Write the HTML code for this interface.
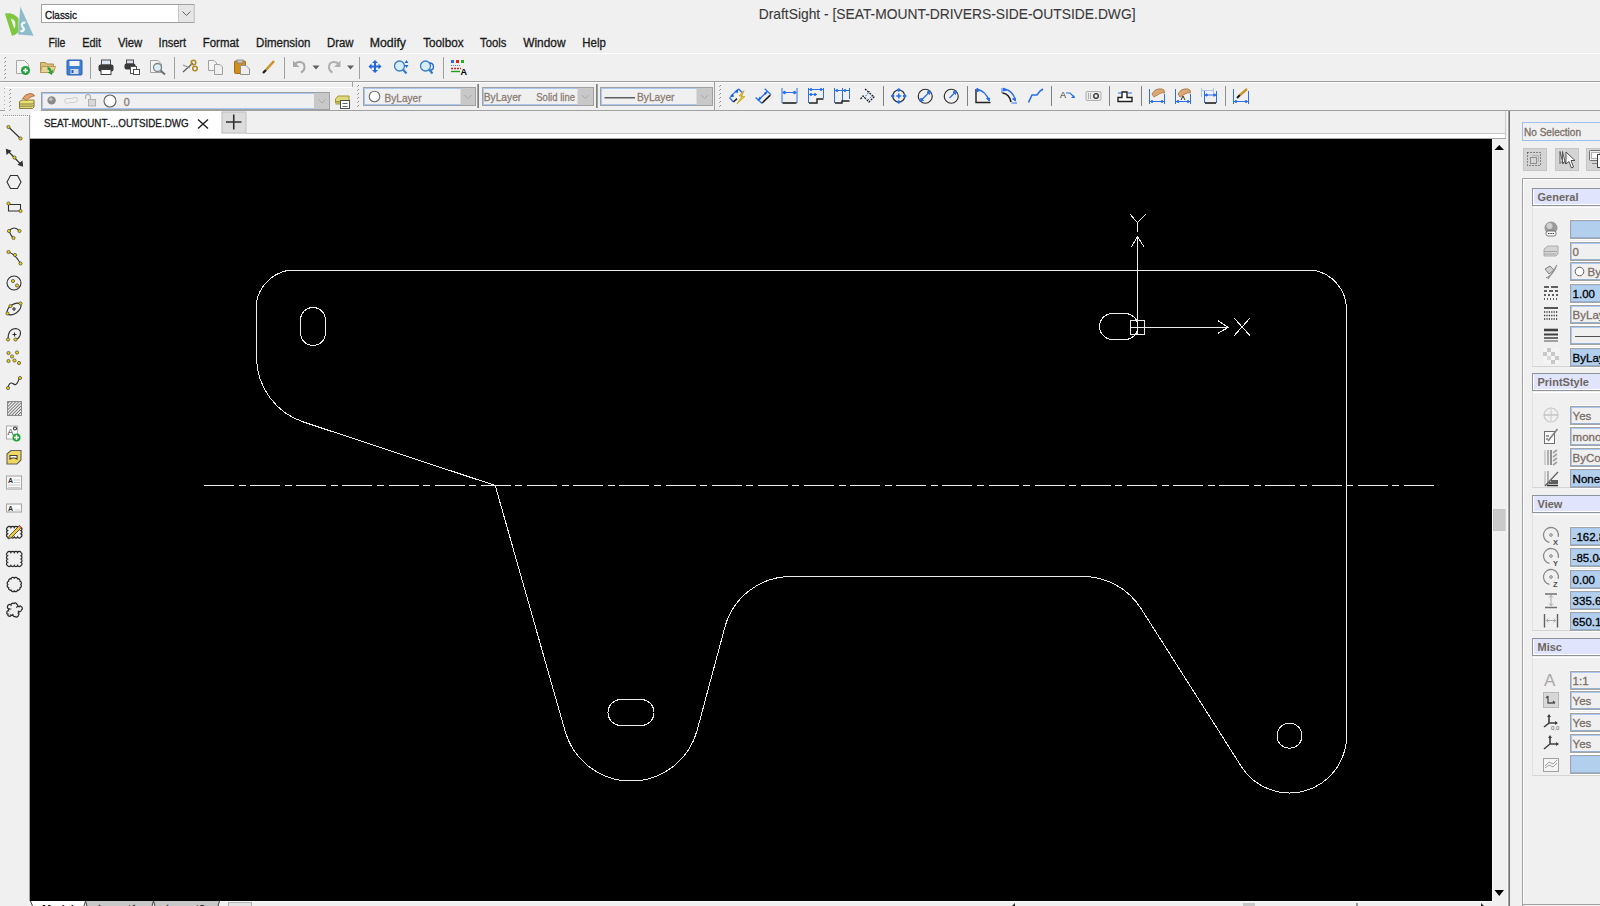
<!DOCTYPE html>
<html><head><meta charset="utf-8"><style>
html,body{margin:0;padding:0;background:#f0f0f0;overflow:hidden;width:1600px;height:906px}
svg{display:block;font-family:"Liberation Sans",sans-serif}
</style></head><body>
<svg width="1600" height="906" viewBox="0 0 1600 906" shape-rendering="auto">
<rect x="0" y="0" width="1600" height="906" fill="#f0f0f0"/>
<rect x="0" y="53" width="1600" height="1" fill="#ffffff"/>
<rect x="0" y="52" width="1600" height="1" fill="#ededed"/>
<text x="758.75" y="18.9" font-size="14.5" fill="#3a3a3a" stroke="#3a3a3a" stroke-width="0.1" textLength="376.75" lengthAdjust="spacingAndGlyphs">DraftSight - [SEAT-MOUNT-DRIVERS-SIDE-OUTSIDE.DWG]</text>
<text x="48.4" y="47" font-size="12" fill="#1a1a1a" stroke="#1a1a1a" stroke-width="0.3" textLength="16.90" lengthAdjust="spacingAndGlyphs">File</text>
<text x="82.2" y="47" font-size="12" fill="#1a1a1a" stroke="#1a1a1a" stroke-width="0.3" textLength="18.80" lengthAdjust="spacingAndGlyphs">Edit</text>
<text x="117.9" y="47" font-size="12" fill="#1a1a1a" stroke="#1a1a1a" stroke-width="0.3" textLength="24.30" lengthAdjust="spacingAndGlyphs">View</text>
<text x="158.6" y="47" font-size="12" fill="#1a1a1a" stroke="#1a1a1a" stroke-width="0.3" textLength="27.40" lengthAdjust="spacingAndGlyphs">Insert</text>
<text x="202.8" y="47" font-size="12" fill="#1a1a1a" stroke="#1a1a1a" stroke-width="0.3" textLength="36.10" lengthAdjust="spacingAndGlyphs">Format</text>
<text x="256.1" y="47" font-size="12" fill="#1a1a1a" stroke="#1a1a1a" stroke-width="0.3" textLength="54.40" lengthAdjust="spacingAndGlyphs">Dimension</text>
<text x="327" y="47" font-size="12" fill="#1a1a1a" stroke="#1a1a1a" stroke-width="0.3" textLength="26.50" lengthAdjust="spacingAndGlyphs">Draw</text>
<text x="369.8" y="47" font-size="12" fill="#1a1a1a" stroke="#1a1a1a" stroke-width="0.3" textLength="36.20" lengthAdjust="spacingAndGlyphs">Modify</text>
<text x="423.2" y="47" font-size="12" fill="#1a1a1a" stroke="#1a1a1a" stroke-width="0.3" textLength="40.40" lengthAdjust="spacingAndGlyphs">Toolbox</text>
<text x="480.1" y="47" font-size="12" fill="#1a1a1a" stroke="#1a1a1a" stroke-width="0.3" textLength="26.30" lengthAdjust="spacingAndGlyphs">Tools</text>
<text x="523.2" y="47" font-size="12" fill="#1a1a1a" stroke="#1a1a1a" stroke-width="0.3" textLength="42.30" lengthAdjust="spacingAndGlyphs">Window</text>
<text x="582.3" y="47" font-size="12" fill="#1a1a1a" stroke="#1a1a1a" stroke-width="0.3" textLength="23.50" lengthAdjust="spacingAndGlyphs">Help</text>
<rect x="41.5" y="4.5" width="152.5" height="18" fill="#ffffff" stroke="#a0a0a0" stroke-width="1"/>
<rect x="179" y="5" width="14.5" height="17" fill="#e6e6e6"/>
<rect x="178" y="5" width="1" height="17" fill="#c8c8c8"/>
<path d="M182.5 11.5 L186.5 15.5 L190.5 11.5" fill="none" stroke="#606060" stroke-width="1"/>
<text x="45" y="18.75" font-size="11.8" fill="#101010" stroke="#101010" stroke-width="0.3" textLength="32.00" lengthAdjust="spacingAndGlyphs">Classic</text>
<rect x="0" y="81" width="1600" height="1" fill="#a0a0a0"/>
<rect x="0" y="82" width="1600" height="1" fill="#fafafa"/>
<rect x="0" y="110" width="5" height="1" fill="#a0a0a0"/>
<rect x="41" y="110" width="1559" height="1" fill="#a0a0a0"/>
<rect x="31" y="111" width="190" height="28" fill="#ffffff"/>
<rect x="222" y="112" width="24" height="21" fill="#dcdcdc" stroke="#c0c0c0" stroke-width="1"/>
<text x="43.9" y="127" font-size="10.8" fill="#1a1a1a" stroke="#1a1a1a" stroke-width="0.3" textLength="144.70" lengthAdjust="spacingAndGlyphs">SEAT-MOUNT-...OUTSIDE.DWG</text>
<path d="M198 119.5 L208 128.5 M208 119.5 L198 128.5" stroke="#202020" stroke-width="1.4"/>
<path d="M226 122 H241.5 M233.75 114.5 V129.5" stroke="#303030" stroke-width="1.6"/>
<rect x="246" y="133" width="1260" height="1" fill="#c8c8c8"/>
<rect x="221" y="134" width="1284" height="5" fill="#ffffff"/>
<rect x="1505" y="111" width="1" height="28" fill="#c8c8c8"/>
<rect x="30" y="139" width="1462" height="762" fill="#000000"/>
<rect x="30" y="138" width="1476" height="1" fill="#a8a8a8"/>
<path d="M1494.5 150 L1499.25 145 L1504 150 Z" fill="#000"/>
<path d="M1494.5 890 L1499.25 896 L1504 890 Z" fill="#000"/>
<rect x="1492" y="139" width="1" height="762" fill="#fafafa"/>
<rect x="1493.5" y="509.5" width="11.5" height="21" fill="#cacaca" stroke="#c4c4c4"/>
<rect x="1507" y="111" width="1" height="795" fill="#f8f8f8"/>
<rect x="1508" y="111" width="1" height="795" fill="#a0a0a0"/>
<rect x="1509" y="111" width="1" height="795" fill="#707070"/>
<rect x="30" y="901" width="1462" height="1" fill="#ffffff"/>
<g fill="none" stroke="#ececec" stroke-width="1" shape-rendering="crispEdges">
<path d="M287.3 270.5 H1315 A40 40 0 0 1 1346.5 306.8 V736 A57 57 0 0 1 1241.39 766.57 L1140.82 608.27 A68.5 68.5 0 0 0 1083 576.5 H791 A68.5 68.5 0 0 0 724.85 627.22 L697.15 730.28 A68.5 68.5 0 0 1 565.11 731.24 L495.2 485.5 L303.47 422.03 A68.5 68.5 0 0 1 256.5 357 V301.6 A40 40 0 0 1 287.3 270.5 Z"/>
<path d="M300.5 320 V333 A12.5 12.5 0 0 0 325.5 333 V320 A12.5 12.5 0 0 0 300.5 320 Z"/>
<path d="M1112.5 313.5 H1125 A13 13 0 0 1 1125 339.5 H1112.5 A13 13 0 0 1 1112.5 313.5 Z"/>
<path d="M621 699.5 H641 A13 13 0 0 1 641 725.5 H621 A13 13 0 0 1 621 699.5 Z"/>
<circle cx="1289.5" cy="735.7" r="12.5"/>
<path d="M204 485.5 H1435" stroke-dasharray="30 4.575 7 4.575"/>
<path d="M1137.5 334.5 V236.7 M1131.3 247.2 L1137.5 236.7 L1144.3 247.2 M1130.2 214.4 L1137.5 222.6 L1145.4 214.4 M1137.5 222.6 V232 M1130.5 327.5 H1228.2 M1217.7 320.4 L1228.2 327.4 L1217.7 333.4 M1234.3 318.3 L1249.8 335.5 M1249.8 318.3 L1234.3 335.5"/>
<rect x="1130.5" y="320.5" width="14" height="14"/>
</g>
<rect x="1522.5" y="122.5" width="90" height="18" fill="#f0f0f0" stroke="#9cc0ea" stroke-width="1"/>
<text x="1524" y="135.5" font-size="10.5" fill="#7a6e66" stroke="#7a6e66" stroke-width="0.3" textLength="57.00" lengthAdjust="spacingAndGlyphs">No Selection</text>
<rect x="1523.5" y="148.5" width="23" height="22" fill="#d4d4d4" stroke="#c6c6c6"/>
<rect x="1555.5" y="148.5" width="23" height="22" fill="#d4d4d4" stroke="#c6c6c6"/>
<rect x="1586.5" y="148.5" width="23" height="22" fill="#d4d4d4" stroke="#c6c6c6"/>
<rect x="1527.5" y="152.5" width="13" height="13" fill="none" stroke="#303030" stroke-dasharray="1 2"/><rect x="1530.5" y="157.5" width="6" height="6" fill="none" stroke="#909090"/><path d="M1532.5 156.5 V155.5 H1538.5 V161.5 H1537.5" fill="none" stroke="#b0b0b0"/>
<path d="M1560 151.5 V163.5 L1562 161.5 L1563 163 L1563 164 Z" fill="#fff" stroke="#505050" stroke-width="0.9"/>
<path d="M1562.5 151.5 V163.5 L1564.5 161.5 L1565.5 163 L1565.5 164 Z" fill="#fff" stroke="#505050" stroke-width="0.9"/>
<path d="M1566 152 V164 L1569 161.5 L1571.5 168 L1573.5 167 L1571 160.5 L1575 160.5 Z" fill="#fff" stroke="#404040" stroke-width="0.9"/>
<rect x="1589.5" y="150.5" width="12" height="10" rx="1" fill="#f0f0f0" stroke="#707070"/><rect x="1591.5" y="152.5" width="8" height="6" fill="#fafafa" stroke="#b0b0b0"/><path d="M1592 163.5 H1598" stroke="#808080"/><rect x="1597.5" y="154.5" width="4" height="13" fill="#fff" stroke="#404040"/>
<path d="M1522.5 906 V178.5 H1600" fill="none" stroke="#a0a0a0"/>
<path d="M1523.5 903 V179.5 H1600" fill="none" stroke="#ffffff"/>
<rect x="1522" y="904" width="78" height="1" fill="#a0a0a0"/>
<rect x="1532" y="206" width="1" height="160" fill="#e2e2e2"/>
<rect x="1532" y="366" width="68" height="1" fill="#d4d4d4"/>
<rect x="1533" y="207" width="67" height="1" fill="#ffffff"/>
<rect x="1532.5" y="188.5" width="80" height="17" fill="#e0e4fc" stroke="#8e949c" stroke-width="1"/>
<path d="M1533.5 205 V189.5 M1533 204.5 H1600" stroke="#ffffff" fill="none"/>
<text x="1537.5" y="201.1" font-size="11" fill="#6e665e" font-weight="bold">General</text>
<rect x="1570" y="219" width="30" height="1" fill="#ffffff"/>
<rect x="1570" y="220" width="30" height="19" fill="#a4a4a4"/>
<rect x="1571" y="221" width="29" height="17" fill="#a9c9f2"/>
<rect x="1572" y="222" width="28" height="15" fill="#b2cfee"/>
<rect x="1571" y="237" width="29" height="1" fill="#98b0d0"/>
<rect x="1570" y="239" width="30" height="1" fill="#ffffff"/>
<rect x="1570" y="241" width="30" height="1" fill="#ffffff"/>
<rect x="1570" y="242" width="30" height="19" fill="#a4a4a4"/>
<rect x="1571" y="243" width="29" height="17" fill="#a9c9f2"/>
<rect x="1572" y="244" width="28" height="15" fill="#f0f0f0"/>
<rect x="1571" y="259" width="29" height="1" fill="#98b0d0"/>
<rect x="1570" y="261" width="30" height="1" fill="#ffffff"/>
<text x="1572.6" y="256" font-size="11.5" fill="#7a6e66" stroke="#7a6e66" stroke-width="0.3">0</text>
<rect x="1570" y="261" width="30" height="1" fill="#ffffff"/>
<rect x="1570" y="262" width="30" height="19" fill="#a4a4a4"/>
<rect x="1571" y="263" width="29" height="17" fill="#a9c9f2"/>
<rect x="1572" y="264" width="28" height="15" fill="#f0f0f0"/>
<rect x="1571" y="279" width="29" height="1" fill="#98b0d0"/>
<rect x="1570" y="281" width="30" height="1" fill="#ffffff"/>
<circle cx="1579.5" cy="271.5" r="4.3" fill="#fff" stroke="#606060"/>
<text x="1587.5" y="276" font-size="11.5" fill="#7a6e66" stroke="#7a6e66" stroke-width="0.3">ByLayer</text>
<rect x="1570" y="283" width="30" height="1" fill="#ffffff"/>
<rect x="1570" y="284" width="30" height="19" fill="#a4a4a4"/>
<rect x="1571" y="285" width="29" height="17" fill="#a9c9f2"/>
<rect x="1572" y="286" width="28" height="15" fill="#b2cfee"/>
<rect x="1571" y="301" width="29" height="1" fill="#98b0d0"/>
<rect x="1570" y="303" width="30" height="1" fill="#ffffff"/>
<text x="1572.6" y="298" font-size="11.5" fill="#000" stroke="#000" stroke-width="0.3">1.00</text>
<rect x="1570" y="304" width="30" height="1" fill="#ffffff"/>
<rect x="1570" y="305" width="30" height="19" fill="#a4a4a4"/>
<rect x="1571" y="306" width="29" height="17" fill="#a9c9f2"/>
<rect x="1572" y="307" width="28" height="15" fill="#f0f0f0"/>
<rect x="1571" y="322" width="29" height="1" fill="#98b0d0"/>
<rect x="1570" y="324" width="30" height="1" fill="#ffffff"/>
<text x="1572.6" y="319" font-size="11.5" fill="#7a6e66" stroke="#7a6e66" stroke-width="0.3">ByLayer</text>
<rect x="1570" y="325" width="30" height="1" fill="#ffffff"/>
<rect x="1570" y="326" width="30" height="19" fill="#a4a4a4"/>
<rect x="1571" y="327" width="29" height="17" fill="#a9c9f2"/>
<rect x="1572" y="328" width="28" height="15" fill="#f0f0f0"/>
<rect x="1571" y="343" width="29" height="1" fill="#98b0d0"/>
<rect x="1570" y="345" width="30" height="1" fill="#ffffff"/>
<rect x="1575" y="336" width="25" height="1" fill="#505050"/>
<rect x="1570" y="347" width="30" height="1" fill="#ffffff"/>
<rect x="1570" y="348" width="30" height="19" fill="#a4a4a4"/>
<rect x="1571" y="349" width="29" height="17" fill="#a9c9f2"/>
<rect x="1572" y="350" width="28" height="15" fill="#b2cfee"/>
<rect x="1571" y="365" width="29" height="1" fill="#98b0d0"/>
<rect x="1570" y="367" width="30" height="1" fill="#ffffff"/>
<text x="1572.6" y="362" font-size="11.5" fill="#000" stroke="#000" stroke-width="0.3">ByLayer</text>
<rect x="1532" y="391" width="1" height="96" fill="#e2e2e2"/>
<rect x="1532" y="487" width="68" height="1" fill="#d4d4d4"/>
<rect x="1533" y="392" width="67" height="1" fill="#ffffff"/>
<rect x="1532.5" y="373.5" width="80" height="17" fill="#e0e4fc" stroke="#8e949c" stroke-width="1"/>
<path d="M1533.5 390 V374.5 M1533 389.5 H1600" stroke="#ffffff" fill="none"/>
<text x="1537.5" y="386.1" font-size="11" fill="#6e665e" font-weight="bold">PrintStyle</text>
<rect x="1570" y="405" width="30" height="1" fill="#ffffff"/>
<rect x="1570" y="406" width="30" height="19" fill="#a4a4a4"/>
<rect x="1571" y="407" width="29" height="17" fill="#a9c9f2"/>
<rect x="1572" y="408" width="28" height="15" fill="#f0f0f0"/>
<rect x="1571" y="423" width="29" height="1" fill="#98b0d0"/>
<rect x="1570" y="425" width="30" height="1" fill="#ffffff"/>
<text x="1572.6" y="420" font-size="11.5" fill="#7a6e66" stroke="#7a6e66" stroke-width="0.3">Yes</text>
<rect x="1570" y="426" width="30" height="1" fill="#ffffff"/>
<rect x="1570" y="427" width="30" height="19" fill="#a4a4a4"/>
<rect x="1571" y="428" width="29" height="17" fill="#a9c9f2"/>
<rect x="1572" y="429" width="28" height="15" fill="#f0f0f0"/>
<rect x="1571" y="444" width="29" height="1" fill="#98b0d0"/>
<rect x="1570" y="446" width="30" height="1" fill="#ffffff"/>
<text x="1572.6" y="441" font-size="11.5" fill="#7a6e66" stroke="#7a6e66" stroke-width="0.3">monochrome</text>
<rect x="1570" y="447" width="30" height="1" fill="#ffffff"/>
<rect x="1570" y="448" width="30" height="19" fill="#a4a4a4"/>
<rect x="1571" y="449" width="29" height="17" fill="#a9c9f2"/>
<rect x="1572" y="450" width="28" height="15" fill="#f0f0f0"/>
<rect x="1571" y="465" width="29" height="1" fill="#98b0d0"/>
<rect x="1570" y="467" width="30" height="1" fill="#ffffff"/>
<text x="1572.6" y="462" font-size="11.5" fill="#7a6e66" stroke="#7a6e66" stroke-width="0.3">ByColor</text>
<rect x="1570" y="468" width="30" height="1" fill="#ffffff"/>
<rect x="1570" y="469" width="30" height="19" fill="#a4a4a4"/>
<rect x="1571" y="470" width="29" height="17" fill="#a9c9f2"/>
<rect x="1572" y="471" width="28" height="15" fill="#b2cfee"/>
<rect x="1571" y="486" width="29" height="1" fill="#98b0d0"/>
<rect x="1570" y="488" width="30" height="1" fill="#ffffff"/>
<text x="1572.6" y="483" font-size="11.5" fill="#000" stroke="#000" stroke-width="0.3">None</text>
<rect x="1532" y="513" width="1" height="117" fill="#e2e2e2"/>
<rect x="1532" y="630" width="68" height="1" fill="#d4d4d4"/>
<rect x="1533" y="514" width="67" height="1" fill="#ffffff"/>
<rect x="1532.5" y="495.5" width="80" height="17" fill="#e0e4fc" stroke="#8e949c" stroke-width="1"/>
<path d="M1533.5 512 V496.5 M1533 511.5 H1600" stroke="#ffffff" fill="none"/>
<text x="1537.5" y="508.1" font-size="11" fill="#6e665e" font-weight="bold">View</text>
<rect x="1570" y="526" width="30" height="1" fill="#ffffff"/>
<rect x="1570" y="527" width="30" height="19" fill="#a4a4a4"/>
<rect x="1571" y="528" width="29" height="17" fill="#a9c9f2"/>
<rect x="1572" y="529" width="28" height="15" fill="#b2cfee"/>
<rect x="1571" y="544" width="29" height="1" fill="#98b0d0"/>
<rect x="1570" y="546" width="30" height="1" fill="#ffffff"/>
<text x="1572.6" y="541" font-size="11.5" fill="#000" stroke="#000" stroke-width="0.3">-162.8</text>
<rect x="1570" y="547" width="30" height="1" fill="#ffffff"/>
<rect x="1570" y="548" width="30" height="19" fill="#a4a4a4"/>
<rect x="1571" y="549" width="29" height="17" fill="#a9c9f2"/>
<rect x="1572" y="550" width="28" height="15" fill="#b2cfee"/>
<rect x="1571" y="565" width="29" height="1" fill="#98b0d0"/>
<rect x="1570" y="567" width="30" height="1" fill="#ffffff"/>
<text x="1572.6" y="562" font-size="11.5" fill="#000" stroke="#000" stroke-width="0.3">-85.04</text>
<rect x="1570" y="569" width="30" height="1" fill="#ffffff"/>
<rect x="1570" y="570" width="30" height="19" fill="#a4a4a4"/>
<rect x="1571" y="571" width="29" height="17" fill="#a9c9f2"/>
<rect x="1572" y="572" width="28" height="15" fill="#b2cfee"/>
<rect x="1571" y="587" width="29" height="1" fill="#98b0d0"/>
<rect x="1570" y="589" width="30" height="1" fill="#ffffff"/>
<text x="1572.6" y="584" font-size="11.5" fill="#000" stroke="#000" stroke-width="0.3">0.00</text>
<rect x="1570" y="590" width="30" height="1" fill="#ffffff"/>
<rect x="1570" y="591" width="30" height="19" fill="#a4a4a4"/>
<rect x="1571" y="592" width="29" height="17" fill="#a9c9f2"/>
<rect x="1572" y="593" width="28" height="15" fill="#b2cfee"/>
<rect x="1571" y="608" width="29" height="1" fill="#98b0d0"/>
<rect x="1570" y="610" width="30" height="1" fill="#ffffff"/>
<text x="1572.6" y="605" font-size="11.5" fill="#000" stroke="#000" stroke-width="0.3">335.6</text>
<rect x="1570" y="611" width="30" height="1" fill="#ffffff"/>
<rect x="1570" y="612" width="30" height="19" fill="#a4a4a4"/>
<rect x="1571" y="613" width="29" height="17" fill="#a9c9f2"/>
<rect x="1572" y="614" width="28" height="15" fill="#b2cfee"/>
<rect x="1571" y="629" width="29" height="1" fill="#98b0d0"/>
<rect x="1570" y="631" width="30" height="1" fill="#ffffff"/>
<text x="1572.6" y="626" font-size="11.5" fill="#000" stroke="#000" stroke-width="0.3">650.1</text>
<rect x="1532" y="656" width="1" height="119" fill="#e2e2e2"/>
<rect x="1532" y="775" width="68" height="1" fill="#d4d4d4"/>
<rect x="1533" y="657" width="67" height="1" fill="#ffffff"/>
<rect x="1532.5" y="638.5" width="80" height="17" fill="#e0e4fc" stroke="#8e949c" stroke-width="1"/>
<path d="M1533.5 655 V639.5 M1533 654.5 H1600" stroke="#ffffff" fill="none"/>
<text x="1537.5" y="651.1" font-size="11" fill="#6e665e" font-weight="bold">Misc</text>
<rect x="1570" y="670" width="30" height="1" fill="#ffffff"/>
<rect x="1570" y="671" width="30" height="19" fill="#a4a4a4"/>
<rect x="1571" y="672" width="29" height="17" fill="#a9c9f2"/>
<rect x="1572" y="673" width="28" height="15" fill="#f0f0f0"/>
<rect x="1571" y="688" width="29" height="1" fill="#98b0d0"/>
<rect x="1570" y="690" width="30" height="1" fill="#ffffff"/>
<text x="1572.6" y="685" font-size="11.5" fill="#7a6e66" stroke="#7a6e66" stroke-width="0.3">1:1</text>
<rect x="1570" y="690" width="30" height="1" fill="#ffffff"/>
<rect x="1570" y="691" width="30" height="19" fill="#a4a4a4"/>
<rect x="1571" y="692" width="29" height="17" fill="#a9c9f2"/>
<rect x="1572" y="693" width="28" height="15" fill="#f0f0f0"/>
<rect x="1571" y="708" width="29" height="1" fill="#98b0d0"/>
<rect x="1570" y="710" width="30" height="1" fill="#ffffff"/>
<text x="1572.6" y="705" font-size="11.5" fill="#7a6e66" stroke="#7a6e66" stroke-width="0.3">Yes</text>
<rect x="1570" y="712" width="30" height="1" fill="#ffffff"/>
<rect x="1570" y="713" width="30" height="19" fill="#a4a4a4"/>
<rect x="1571" y="714" width="29" height="17" fill="#a9c9f2"/>
<rect x="1572" y="715" width="28" height="15" fill="#f0f0f0"/>
<rect x="1571" y="730" width="29" height="1" fill="#98b0d0"/>
<rect x="1570" y="732" width="30" height="1" fill="#ffffff"/>
<text x="1572.6" y="727" font-size="11.5" fill="#7a6e66" stroke="#7a6e66" stroke-width="0.3">Yes</text>
<rect x="1570" y="733" width="30" height="1" fill="#ffffff"/>
<rect x="1570" y="734" width="30" height="19" fill="#a4a4a4"/>
<rect x="1571" y="735" width="29" height="17" fill="#a9c9f2"/>
<rect x="1572" y="736" width="28" height="15" fill="#f0f0f0"/>
<rect x="1571" y="751" width="29" height="1" fill="#98b0d0"/>
<rect x="1570" y="753" width="30" height="1" fill="#ffffff"/>
<text x="1572.6" y="748" font-size="11.5" fill="#7a6e66" stroke="#7a6e66" stroke-width="0.3">Yes</text>
<rect x="1570" y="754" width="30" height="1" fill="#ffffff"/>
<rect x="1570" y="755" width="30" height="19" fill="#a4a4a4"/>
<rect x="1571" y="756" width="29" height="17" fill="#a9c9f2"/>
<rect x="1572" y="757" width="28" height="15" fill="#b2cfee"/>
<rect x="1571" y="772" width="29" height="1" fill="#98b0d0"/>
<rect x="1570" y="774" width="30" height="1" fill="#ffffff"/>
<g transform="translate(1543 221)"><circle cx="8" cy="7" r="6.5" fill="#9a9a9a"/><circle cx="6.5" cy="5" r="3" fill="#d0d0d0"/><rect x="3" y="10" width="10" height="5" rx="2" fill="#f8f8f8" stroke="#606060" stroke-width="0.8"/><path d="M5 12.5 H11" stroke="#404040" stroke-dasharray="1.5 0.8"/></g>
<g transform="translate(1543 243)"><path d="M1 6 L5 3 H15 V11 L13 13 H1 Z" fill="#d4d4d4" stroke="#a0a0a0" stroke-width="0.8"/><path d="M1 8.5 H14 M1 11 H13" stroke="#a8a8a8"/></g>
<g transform="translate(1543 264)"><path d="M2 5 L7 2 L11 6 L6 10 Z" fill="#d0d0d0" stroke="#808080"/><path d="M14 1 Q10 8 5 15 M13 3 Q9 12 3 14" fill="none" stroke="#909090" stroke-width="1.2"/></g>
<g transform="translate(1543 285)"><path d="M1 2 H6 M8 2 H15 M1 6 H4 M6 6 H10 M12 6 H15 M1 10 H3 M5 10 H7 M9 10 H11 M13 10 H15 M1 14 H2 M4 14 H5 M7 14 H8 M10 14 H11 M13 14 H14" stroke="#303030" stroke-width="1.3" stroke-dasharray="none"/></g>
<g transform="translate(1543 306)"><path d="M1 2 H15" stroke="#303030" stroke-width="1.6"/><path d="M1 6 H15 M1 9.5 H15 M1 13 H15" stroke="#303030" stroke-width="1.3" stroke-dasharray="1.2 1.2"/></g>
<g transform="translate(1543 327)"><path d="M1 3 H15" stroke="#404040" stroke-width="2.6"/><path d="M1 7.5 H15" stroke="#404040" stroke-width="2"/><path d="M1 11 H15" stroke="#404040" stroke-width="1.5"/><path d="M1 14 H15" stroke="#505050" stroke-width="1"/></g>
<g transform="translate(1543 348)"><rect x="0" y="0" width="16" height="16" fill="#f4f4f4"/><rect x="4" y="0" width="4" height="4" fill="#c8c8c8"/><rect x="0" y="4" width="4" height="4" fill="#c8c8c8"/><rect x="8" y="4" width="4" height="4" fill="#c8c8c8"/><rect x="4" y="8" width="4" height="4" fill="#d8d8d8"/><rect x="12" y="8" width="4" height="4" fill="#c8c8c8"/><rect x="8" y="12" width="4" height="4" fill="#c8c8c8"/></g>
<g transform="translate(1543 406)"><circle cx="8" cy="9" r="7" fill="none" stroke="#c8c8c8" stroke-width="1.2"/><path d="M1 9 H15" stroke="#c0c0c0" stroke-width="1.4"/><path d="M8 3 V15" stroke="#c8c8c8"/></g>
<g transform="translate(1543 428)"><rect x="1.5" y="3.5" width="10" height="12" fill="#fafafa" stroke="#707070"/><path d="M3 8 H6 M3 11 H5" stroke="#404040"/><path d="M14.5 1 L5 13" stroke="#808080" stroke-width="1.6"/></g>
<g transform="translate(1543 449)"><rect x="1" y="1" width="2" height="15" fill="#d0d0d0"/><rect x="4" y="1" width="2" height="15" fill="#b0b0b0"/><rect x="7" y="1" width="2" height="15" fill="#909090"/><path d="M10 4 L14 1 M10 8 L14 5 M10 12 L14 9 M10 16 L14 13" stroke="#a0a0a0" stroke-width="1.6"/></g>
<g transform="translate(1543 470)"><rect x="1" y="1" width="2" height="15" fill="#d0d0d0"/><rect x="4" y="1" width="2" height="15" fill="#b0b0b0"/><path d="M2 16 L15 2" stroke="#606060" stroke-width="1.2"/><path d="M8 11 H15 M6 13 H15 M4 15.5 H15" stroke="#303030" stroke-width="1.6"/></g>
<g transform="translate(1543 528)"><path d="M15.2 8.9 A7.5 7.5 0 1 0 6.5 14.4" fill="none" stroke="#8a8a8a" stroke-width="1.3"/><circle cx="8" cy="7" r="1.3" fill="none" stroke="#808080"/><text x="10" y="17" font-size="7.5" font-weight="bold" fill="#505050">X</text></g>
<g transform="translate(1543 549)"><path d="M15.2 8.9 A7.5 7.5 0 1 0 6.5 14.4" fill="none" stroke="#8a8a8a" stroke-width="1.3"/><circle cx="8" cy="7" r="1.3" fill="none" stroke="#808080"/><text x="10" y="17" font-size="7.5" font-weight="bold" fill="#505050">Y</text></g>
<g transform="translate(1543 570)"><path d="M15.2 8.9 A7.5 7.5 0 1 0 6.5 14.4" fill="none" stroke="#8a8a8a" stroke-width="1.3"/><circle cx="8" cy="7" r="1.3" fill="none" stroke="#808080"/><text x="10" y="17" font-size="7.5" font-weight="bold" fill="#505050">Z</text></g>
<g transform="translate(1543 592)"><path d="M2 2 H14 M2 15.5 H14" stroke="#707070" stroke-width="1.3"/><path d="M8 3 V14 M6 5.5 L8 3.5 L10 5.5 M6 11.5 L8 13.5 L10 11.5" fill="none" stroke="#a8a8a8"/></g>
<g transform="translate(1543 613)"><path d="M1.5 1 V14.5 M14.5 1 V14.5" stroke="#606060" stroke-width="1.4"/><path d="M3 7.5 H13 M5.5 5.5 L3.5 7.5 L5.5 9.5 M10.5 5.5 L12.5 7.5 L10.5 9.5" fill="none" stroke="#a8a8a8"/></g>
<g transform="translate(1543 670)"><text x="1" y="16" font-size="17" fill="#a8a8a8">A</text></g>
<g transform="translate(1543 692)"><rect x="0.5" y="0.5" width="15" height="15" fill="#d8d8d8" stroke="#b8b8b8"/><path d="M5 4 V11 H12 M5 4 L3 6 M12 11 L10 9" fill="none" stroke="#505050" stroke-width="1.3"/></g>
<g transform="translate(1543 713)"><path d="M6 3 V10 L1 14 M6 10 H14" fill="none" stroke="#404040" stroke-width="1.6"/><path d="M6 1 L4 4 H8 Z M15 10 L12 8 V12 Z" fill="#404040"/><text x="8" y="16.5" font-size="6" fill="#606060">0,0</text></g>
<g transform="translate(1543 734)"><path d="M7 3 V10 L1 15 M7 10 H15" fill="none" stroke="#404040" stroke-width="1.6"/><path d="M7 1 L5 4 H9 Z M16 10 L13 8 V12 Z" fill="#404040"/></g>
<g transform="translate(1543 756)"><rect x="0.5" y="2.5" width="15" height="13" fill="#f4f4f4" stroke="#a0a0a0"/><path d="M2 10 L6 6 L10 8 L14 4 M2 12 L6 9 L10 11 L14 7" fill="none" stroke="#a0a0a0"/></g>
<rect x="5" y="57" width="1" height="1" fill="#8a8a8a"/>
<rect x="4" y="58" width="1" height="1" fill="#a8a8a8"/>
<rect x="5" y="61" width="1" height="1" fill="#8a8a8a"/>
<rect x="4" y="62" width="1" height="1" fill="#a8a8a8"/>
<rect x="5" y="65" width="1" height="1" fill="#8a8a8a"/>
<rect x="4" y="66" width="1" height="1" fill="#a8a8a8"/>
<rect x="5" y="69" width="1" height="1" fill="#8a8a8a"/>
<rect x="4" y="70" width="1" height="1" fill="#a8a8a8"/>
<rect x="5" y="73" width="1" height="1" fill="#8a8a8a"/>
<rect x="4" y="74" width="1" height="1" fill="#a8a8a8"/>
<rect x="5" y="77" width="1" height="1" fill="#8a8a8a"/>
<rect x="4" y="78" width="1" height="1" fill="#a8a8a8"/>
<g transform="translate(16 59)"><path d="M0.5 1.5 H8.5 L12.5 5.5 V14.5 H0.5 Z" fill="#f4f4f4" stroke="#a8a8a8"/><circle cx="9.5" cy="11.5" r="4.5" fill="#1fa33a"/><path d="M9.5 9 V14 M7 11.5 H12" stroke="#fff" stroke-width="1.6"/></g>
<g transform="translate(40 59)"><path d="M0.5 3.5 H5.5 L7 5 H13.5 V13.5 H0.5 Z" fill="#d8bd78" stroke="#b09048"/><path d="M2 7.5 H15.5 L13.5 13.5 H0.5 Z" fill="#e9d59a" stroke="#b89a58"/><path d="M7.5 8 Q11 8 11.5 12 L13.5 10 L12 16 L7.5 13.5 L9.5 13 Q9.5 10.5 7.5 10.5Z" fill="#2aa040"/></g>
<g transform="translate(66.5 59)"><rect x="0.5" y="1" width="15" height="15" rx="1" fill="#3f7fd0" stroke="#2860b0"/><rect x="3" y="2" width="10" height="5" fill="#f4f4f4"/><rect x="4" y="10" width="8" height="5" fill="#d8dce8"/><rect x="5" y="11" width="2" height="3" fill="#2860b0"/></g>
<rect x="90" y="57" width="1" height="22" fill="#a0a0a0"/>
<g transform="translate(98 59)"><rect x="3.5" y="1" width="9" height="5" fill="#dde8f4" stroke="#505050"/><rect x="0.5" y="5.5" width="15" height="7" rx="2" fill="#3a3a3a"/><rect x="3" y="10.5" width="10" height="5" fill="#fff" stroke="#404040"/></g>
<g transform="translate(124 59)"><rect x="2.5" y="1" width="7" height="4" fill="#dde" stroke="#505050"/><rect x="0.5" y="4.5" width="11" height="6" rx="2" fill="#3a3a3a"/><rect x="6.5" y="7.5" width="6" height="7" fill="#fff" stroke="#505050"/><rect x="9.5" y="10.5" width="6" height="5" fill="#fff" stroke="#505050"/></g>
<g transform="translate(150 59)"><path d="M0.5 1.5 H8 L11.5 5 V13.5 H0.5 Z" fill="#f4f4f4" stroke="#a0a0a0"/><circle cx="7.5" cy="8.5" r="4" fill="#d8eef8" stroke="#808080" stroke-width="1.3"/><path d="M10.5 11.5 L15 15.5" stroke="#707070" stroke-width="2"/></g>
<rect x="174" y="57" width="1" height="22" fill="#a0a0a0"/>
<g transform="translate(182 59)"><path d="M1 13 L11 4" stroke="#606060" stroke-width="1.3"/><path d="M1 6 L8 9" stroke="#909090" stroke-width="1.3"/><circle cx="11.5" cy="3.5" r="2.3" fill="none" stroke="#b08a20" stroke-width="1.5"/><circle cx="13" cy="9.5" r="2.3" fill="none" stroke="#b08a20" stroke-width="1.5"/></g>
<g transform="translate(208 59)"><path d="M0.5 1.5 H6 L8.5 4 V11.5 H0.5 Z" fill="#f4f4f4" stroke="#a0a0a0"/><path d="M6.5 5.5 H12 L14.5 8 V15.5 H6.5 Z" fill="#f0f0f0" stroke="#a0a0a0"/></g>
<g transform="translate(234 59)"><rect x="0.5" y="2" width="11" height="12.5" rx="1" fill="#d08e1c" stroke="#a86c10"/><rect x="3" y="1" width="6" height="3" fill="#c8c8c8" stroke="#808080" stroke-width="0.8"/><path d="M6.5 6.5 H12 L15.5 10 V15.5 H6.5 Z" fill="#eeeeee" stroke="#909090"/></g>
<g transform="translate(261 59)"><path d="M13 2 L5 11" stroke="#c89428" stroke-width="2.6"/><path d="M5 11 L2 14" stroke="#222" stroke-width="2.4"/></g>
<rect x="284" y="57" width="1" height="22" fill="#a0a0a0"/>
<g transform="translate(292 59)"><path d="M3 5 Q5 2.5 8.5 3 Q13 4 12.5 9 Q12 12 9 13.5" fill="none" stroke="#a8a8a8" stroke-width="2"/><path d="M1 1.5 V8 H7.5 Z" fill="#a8a8a8"/></g>
<path d="M312.5 65.5 H319.5 L316 69.5 Z" fill="#606060"/>
<g transform="translate(326.5 59)"><path d="M12 5 Q10 2.5 6.5 3 Q2 4 2.5 9 Q3 12 6 13.5" fill="none" stroke="#b0b0b0" stroke-width="2"/><path d="M14 1.5 V8 H7.5 Z" fill="#b0b0b0"/></g>
<path d="M347 65.5 H354 L350.5 69.5 Z" fill="#606060"/>
<rect x="359" y="57" width="1" height="22" fill="#a0a0a0"/>
<g transform="translate(368 59.5)"><path d="M7 0.5 L10 3.5 H8 V6 H10.5 V4 L13.5 7 L10.5 10 V8 H8 V10.5 H10 L7 13.5 L4 10.5 H6 V8 H3.5 V10 L0.5 7 L3.5 4 V6 H6 V3.5 H4 Z" fill="#1f6ad8"/></g>
<g transform="translate(393.5 59)"><circle cx="6" cy="7" r="5" fill="#d6ecf8" stroke="#3a7cc8" stroke-width="1.3"/><path d="M9.5 10.5 L13 14.5" stroke="#3a7cc8" stroke-width="2.2"/><path d="M13 1 L15 4 H11 Z M13 9 L15 6 H11Z" fill="#1f6ad8"/></g>
<g transform="translate(419.5 59)"><circle cx="6" cy="7" r="5" fill="#d6ecf8" stroke="#3a7cc8" stroke-width="1.3"/><path d="M9.5 10.5 L13 14.5" stroke="#3a7cc8" stroke-width="2.2"/><path d="M10 4 Q14 4 14 8 Q14 11 11 11" fill="none" stroke="#1f6ad8" stroke-width="1.3"/></g>
<rect x="443" y="57" width="1" height="22" fill="#a0a0a0"/>
<g transform="translate(451 59)"><rect x="0" y="1" width="3" height="3" fill="#2a6ee8"/><rect x="5" y="1" width="3" height="3" fill="#e82020"/><rect x="10" y="1" width="3" height="3" fill="#20b020"/><path d="M0 6.5 H10" stroke="#5080e0" stroke-dasharray="1 1"/><path d="M0 9.5 H10" stroke="#e02020" stroke-width="1.4" stroke-dasharray="2 1"/><path d="M0 12.5 H9" stroke="#20a020" stroke-width="1.4"/><text x="9.5" y="15.5" font-size="9" font-weight="bold" fill="#000">A</text></g>
<rect x="5" y="87" width="347" height="1" fill="#ffffff"/>
<rect x="4" y="88" width="1" height="1" fill="#b0b0b0"/>
<rect x="10" y="89" width="1" height="1" fill="#8a8a8a"/>
<rect x="9" y="90" width="1" height="1" fill="#a8a8a8"/>
<rect x="4" y="92" width="1" height="1" fill="#b0b0b0"/>
<rect x="10" y="93" width="1" height="1" fill="#8a8a8a"/>
<rect x="9" y="94" width="1" height="1" fill="#a8a8a8"/>
<rect x="4" y="96" width="1" height="1" fill="#b0b0b0"/>
<rect x="10" y="97" width="1" height="1" fill="#8a8a8a"/>
<rect x="9" y="98" width="1" height="1" fill="#a8a8a8"/>
<rect x="4" y="100" width="1" height="1" fill="#b0b0b0"/>
<rect x="10" y="101" width="1" height="1" fill="#8a8a8a"/>
<rect x="9" y="102" width="1" height="1" fill="#a8a8a8"/>
<rect x="4" y="104" width="1" height="1" fill="#b0b0b0"/>
<rect x="10" y="105" width="1" height="1" fill="#8a8a8a"/>
<rect x="9" y="106" width="1" height="1" fill="#a8a8a8"/>
<rect x="4" y="108" width="1" height="1" fill="#b0b0b0"/>
<rect x="10" y="109" width="1" height="1" fill="#8a8a8a"/>
<rect x="9" y="110" width="1" height="1" fill="#a8a8a8"/>
<rect x="352" y="82" width="1" height="5" fill="#a0a0a0"/>
<rect x="358" y="85" width="1" height="1" fill="#8a8a8a"/>
<rect x="357" y="86" width="1" height="1" fill="#a8a8a8"/>
<rect x="358" y="89" width="1" height="1" fill="#8a8a8a"/>
<rect x="357" y="90" width="1" height="1" fill="#a8a8a8"/>
<rect x="358" y="93" width="1" height="1" fill="#8a8a8a"/>
<rect x="357" y="94" width="1" height="1" fill="#a8a8a8"/>
<rect x="358" y="97" width="1" height="1" fill="#8a8a8a"/>
<rect x="357" y="98" width="1" height="1" fill="#a8a8a8"/>
<rect x="358" y="101" width="1" height="1" fill="#8a8a8a"/>
<rect x="357" y="102" width="1" height="1" fill="#a8a8a8"/>
<rect x="358" y="105" width="1" height="1" fill="#8a8a8a"/>
<rect x="357" y="106" width="1" height="1" fill="#a8a8a8"/>
<g transform="translate(19 93)"><path d="M0.5 8.5 L3 7 H15 V14 L13.5 15.5 H0.5 Z" fill="#e8e070" stroke="#787040" stroke-width="0.9"/><path d="M0.5 11 H13.5 L15 9.5 M0.5 13.2 H13.5 L15 11.7" fill="none" stroke="#787040" stroke-width="0.9"/><path d="M3 7 Q8 5 11 7" fill="#fff8b0"/><path d="M3.5 5.5 Q6 1 11 0.5 Q15 0.5 15.5 3 Q13 3 11 4.5 L8 7.5 Q6 6 3.5 5.5 Z" fill="#e0a070" stroke="#a06030" stroke-width="0.8"/></g>
<rect x="41.5" y="92.5" width="288" height="17" fill="#f0f0f0" stroke="#a0a0a0"/>
<path d="M42.5 109 V93.5 H314" fill="none" stroke="#a8c8f0"/>
<rect x="42" y="108" width="272" height="1" fill="#a8c8f0"/>
<rect x="314" y="93" width="15" height="16" fill="#c8c8c8"/>
<path d="M318.5 99.5 L322 103 L325.5 99.5" fill="none" stroke="#a8a8a8"/>
<circle cx="51.6" cy="100.4" r="4.2" fill="#8a8a8a"/><circle cx="50.8" cy="99.3" r="1.8" fill="#c0c0c0"/>
<path d="M65 102 Q64 98 68 98.5 Q72 99 75 97.5 Q78 97 77.5 100 Q77 103 72 102.5 Q68 102 66.5 104 Z" fill="none" stroke="#c8c8c8" stroke-width="0.9"/>
<path d="M85.5 99 V97 Q85.5 94.5 88 94.5 Q90.5 94.5 90.5 97 V99" fill="none" stroke="#b0b0b0" stroke-width="1.2"/><rect x="88.5" y="99.5" width="7" height="6.5" fill="#d8d8d8" stroke="#b0b0b0"/>
<circle cx="110" cy="101" r="6" fill="#fff" stroke="#606060" stroke-width="1.1"/>
<text x="123.7" y="105.8" font-size="10.5" fill="#8a7a70" stroke="#8a7a70" stroke-width="0.3" textLength="6.00" lengthAdjust="spacingAndGlyphs">0</text>
<g transform="translate(335 94)"><path d="M0.5 5 L3 2 H14 V9 H0.5 Z" fill="#e0d880" stroke="#a09830"/><path d="M0.5 7.5 H10 M0.5 10 H8" stroke="#a09830"/><rect x="5.5" y="6.5" width="9" height="8" fill="#fff" stroke="#505050"/><path d="M7.5 9.5 H12.5 M7.5 12.5 H12.5" stroke="#606060"/></g>
<rect x="363.5" y="87.5" width="112" height="18" fill="#f0f0f0" stroke="#a0a0a0"/>
<path d="M364.5 105 V88.5 H461" fill="none" stroke="#a8c8f0"/>
<rect x="364" y="104" width="97" height="1" fill="#a8c8f0"/>
<rect x="460.5" y="88" width="14.5" height="17" fill="#c8c8c8"/>
<path d="M464.5 95.0 L468.0 98.5 L471.5 95.0" fill="none" stroke="#a8a8a8"/>
<circle cx="374.5" cy="96.5" r="5.3" fill="#fff" stroke="#707070" stroke-width="1.1"/>
<text x="384.5" y="101.6" font-size="11.8" fill="#8a7a70" stroke="#8a7a70" stroke-width="0.3" textLength="37.10" lengthAdjust="spacingAndGlyphs">ByLayer</text>
<rect x="477" y="84" width="1" height="24" fill="#a0a0a0"/>
<rect x="478" y="84" width="1" height="24" fill="#808080"/>
<rect x="482.5" y="87.5" width="111" height="18" fill="#f0f0f0" stroke="#a0a0a0"/>
<path d="M483.5 105 V88.5 H578" fill="none" stroke="#a8c8f0"/>
<rect x="483" y="104" width="95" height="1" fill="#a8c8f0"/>
<rect x="577.5" y="88" width="15.5" height="17" fill="#c8c8c8"/>
<path d="M582.0 95.0 L585.5 98.5 L589.0 95.0" fill="none" stroke="#a8a8a8"/>
<text x="483.75" y="101.25" font-size="11.8" fill="#8a7a70" stroke="#8a7a70" stroke-width="0.3" textLength="37.50" lengthAdjust="spacingAndGlyphs">ByLayer</text>
<text x="536.25" y="101.25" font-size="11.8" fill="#8a7a70" stroke="#8a7a70" stroke-width="0.3" textLength="38.75" lengthAdjust="spacingAndGlyphs">Solid line</text>
<rect x="596" y="84" width="1" height="24" fill="#808080"/>
<rect x="597" y="84" width="1" height="24" fill="#a0a0a0"/>
<rect x="600.5" y="87.5" width="112" height="18" fill="#f0f0f0" stroke="#a0a0a0"/>
<path d="M601.5 105 V88.5 H697" fill="none" stroke="#a8c8f0"/>
<rect x="601" y="104" width="96" height="1" fill="#a8c8f0"/>
<rect x="696.5" y="88" width="15.5" height="17" fill="#c8c8c8"/>
<path d="M701.0 95.0 L704.5 98.5 L708.0 95.0" fill="none" stroke="#a8a8a8"/>
<rect x="604.5" y="97" width="30.5" height="1.5" fill="#606060"/>
<text x="637" y="101.25" font-size="11.8" fill="#8a7a70" stroke="#8a7a70" stroke-width="0.3" textLength="37.50" lengthAdjust="spacingAndGlyphs">ByLayer</text>
<rect x="714" y="82" width="1" height="28" fill="#a0a0a0"/>
<rect x="720" y="85" width="1" height="1" fill="#8a8a8a"/>
<rect x="719" y="86" width="1" height="1" fill="#a8a8a8"/>
<rect x="720" y="89" width="1" height="1" fill="#8a8a8a"/>
<rect x="719" y="90" width="1" height="1" fill="#a8a8a8"/>
<rect x="720" y="93" width="1" height="1" fill="#8a8a8a"/>
<rect x="719" y="94" width="1" height="1" fill="#a8a8a8"/>
<rect x="720" y="97" width="1" height="1" fill="#8a8a8a"/>
<rect x="719" y="98" width="1" height="1" fill="#a8a8a8"/>
<rect x="720" y="101" width="1" height="1" fill="#8a8a8a"/>
<rect x="719" y="102" width="1" height="1" fill="#a8a8a8"/>
<rect x="720" y="105" width="1" height="1" fill="#8a8a8a"/>
<rect x="719" y="106" width="1" height="1" fill="#a8a8a8"/>
<g fill="none" stroke="#2a6ee8" stroke-width="1.3"><path d="M733.4 102 L729.5 97.5 M738.4 88.7 L742.5 92.8"/><path d="M730.6 96.4 L738 89.4"/></g>
<path d="M733.4 102 L737 98.6" stroke="#202020" stroke-width="1.5"/>
<path d="M729.8 97.6 L732.6 93.4 L734.2 96.6 Z M738.6 88.8 L734.4 91.6 L737.6 93.2Z" fill="#1f5ee0"/>
<path d="M744 90.5 L739 96 L742 96.3 L736.8 104 L745 96.5 L741.8 96.4 Z" fill="#e8c010" stroke="#b09000" stroke-width="0.5"/>
<g fill="none" stroke="#2a6ee8" stroke-width="1.3"><path d="M764.7 88.7 L770.9 94.6 M762.2 103.4 L755.6 97.4 M758 100.5 L767.5 91.2"/></g>
<path d="M770.3 95.2 L762.2 103" stroke="#202020" stroke-width="1.6"/>
<path d="M757.5 100.8 L759.5 96.8 L761.5 98.8 Z M767.8 91 L763.8 93 L765.8 95 Z" fill="#1f5ee0"/>
<g transform="translate(781.5 88)"><g fill="none" stroke="#2a6ee8" stroke-width="1"><path d="M0.5 0 V15 M15.5 0 V15 M1 4.5 H15"/><path d="M1 15 H15" stroke="#202020" stroke-width="1.6"/><circle cx="3" cy="4.5" r="1.2" fill="#2a6ee8"/><circle cx="13" cy="4.5" r="1.2" fill="#2a6ee8"/></g></g>
<g transform="translate(808 88)"><g fill="none" stroke="#2a6ee8" stroke-width="1"><path d="M0.5 0 V15 M15.5 0 V10 M1 1.5 H15 M1 6.5 H9"/><path d="M1 15 H9 V11 H15.5" stroke="#202020" stroke-width="1.4"/><circle cx="3" cy="1.5" r="1" fill="#2a6ee8"/><circle cx="13" cy="1.5" r="1" fill="#2a6ee8"/><circle cx="3" cy="6.5" r="1" fill="#2a6ee8"/><circle cx="7" cy="6.5" r="1" fill="#2a6ee8"/></g></g>
<g transform="translate(834 88)"><g fill="none" stroke="#2a6ee8" stroke-width="1"><path d="M0.5 0 V15 M8.5 0 V13 M15.5 0 V11 M1 2.5 H15"/><path d="M1 15 H8 V13 H15.5" stroke="#202020" stroke-width="1.4"/><circle cx="3" cy="2.5" r="1" fill="#2a6ee8"/><circle cx="11" cy="2.5" r="1" fill="#2a6ee8"/></g></g>
<g transform="translate(860 88)"><g fill="none" stroke="#2a6ee8" stroke-width="1"><path d="M4 10 L10 3 M8 12 L13 7" stroke-dasharray="1.5 1"/><path d="M0.5 11 L3 8 L9 14 L15 8 M5 1 L14 9" stroke="#202020" stroke-width="1.3" stroke-dasharray="2 1"/></g></g>
<rect x="883" y="86" width="1" height="20" fill="#808080"/>
<g transform="translate(891.5 88)"><g fill="none" stroke="#2a6ee8" stroke-width="1"><circle cx="7.25" cy="8" r="6" stroke="#303030" stroke-width="1.2"/><path d="M7.25 5.5 V10.5 M4.75 8 H9.75" stroke-width="1.6"/><circle cx="7.25" cy="2" r="1.3" fill="#2a6ee8"/><circle cx="7.25" cy="14" r="1.3" fill="#2a6ee8"/><circle cx="1.25" cy="8" r="1.3" fill="#2a6ee8"/><circle cx="13.25" cy="8" r="1.3" fill="#2a6ee8"/></g></g>
<g transform="translate(917.5 88)"><g fill="none" stroke="#2a6ee8" stroke-width="1"><circle cx="7.75" cy="8.25" r="7" stroke="#303030" stroke-width="1.2"/><path d="M3 13 L12.5 3.5" stroke-width="1.3"/><path d="M2.5 13.5 L3.5 10 L6 12.5 Z M13 3 L12 6.5 L9.5 4 Z" fill="#2a6ee8"/></g></g>
<g transform="translate(943.5 88)"><g fill="none" stroke="#2a6ee8" stroke-width="1"><circle cx="7.75" cy="8.25" r="7" stroke="#303030" stroke-width="1.2"/><path d="M6 10 L12.5 3.5" stroke-width="1.3"/><path d="M13 3 L12 6.5 L9.5 4 Z" fill="#2a6ee8"/></g></g>
<rect x="967" y="86" width="1" height="20" fill="#808080"/>
<g transform="translate(975.5 88)"><g fill="none" stroke="#2a6ee8" stroke-width="1"><path d="M0.5 1 V14.5 H15" stroke="#202020" stroke-width="1.4"/><path d="M2 1.5 Q10 3 13.5 12.5" stroke-width="1.3"/><path d="M1.5 0 L4.5 2.5 L1.5 3.5 Z M14 13 L11 10.5 L14 10 Z" fill="#2a6ee8"/></g></g>
<g transform="translate(1001.5 88)"><g fill="none" stroke="#2a6ee8" stroke-width="1"><path d="M0.5 0 V5 M10 15 H15.5"/><path d="M1 5 Q8 6 9.5 14" stroke="#202020" stroke-width="1.6"/><path d="M3 1 Q11 2.5 14 12" stroke-width="1.3"/><path d="M2 0 L5 2 L2 3 Z M14 13 L11 11 L14 10 Z" fill="#2a6ee8"/></g></g>
<g transform="translate(1028 88)"><g fill="none" stroke="#2a6ee8" stroke-width="1"><path d="M0.5 14.5 L4 7 H9 L12 3 L15 1" stroke-width="1.6"/></g></g>
<rect x="1051" y="86" width="1" height="20" fill="#808080"/>
<g transform="translate(1060 90)"><text x="0" y="8" font-size="9" fill="#303030">A</text><path d="M6 3 H10 L14 7" fill="none" stroke="#2a6ee8" stroke-width="1.2"/><path d="M15 8 L11 8 L14 5 Z" fill="#2a6ee8"/></g>
<g transform="translate(1085.5 91)"><rect x="0.5" y="0.5" width="15" height="9" rx="1" fill="#e8e8e8" stroke="#b0b0b0"/><path d="M3 2 V8 M5 2 V8" stroke="#b0b0b0"/><circle cx="10.5" cy="5" r="2.3" fill="none" stroke="#303030" stroke-width="1.3"/></g>
<rect x="1109" y="86" width="1" height="20" fill="#808080"/>
<g transform="translate(1117 90)"><path d="M1 7.5 H5 V2 H10 V7.5 H15 V11.5 H1 Z" fill="#fff" stroke="#202020" stroke-width="1.4"/><path d="M1 3 H4 M11 3 H15" stroke="#2a6ee8" stroke-width="1.2"/></g>
<rect x="1141" y="86" width="1" height="20" fill="#808080"/>
<g transform="translate(1149 88)"><g fill="none" stroke="#2a6ee8" stroke-width="1"><path d="M0.5 1 V16 M15.5 6 V16 M1 13.5 H15"/><circle cx="3" cy="13.5" r="1" fill="#2a6ee8"/><circle cx="13" cy="13.5" r="1" fill="#2a6ee8"/><path d="M3 6 Q6 0 13 1 Q16 1.5 15.5 5 Q13 4 10 6 L5 9 Z" fill="#d9a878" stroke="#a87040" stroke-width="0.8"/></g></g>
<g transform="translate(1175 88)"><g fill="none" stroke="#2a6ee8" stroke-width="1"><path d="M0.5 1 V16 M15.5 6 V16 M1 13.5 H15"/><circle cx="3" cy="13.5" r="1" fill="#2a6ee8"/><circle cx="13" cy="13.5" r="1" fill="#2a6ee8"/><path d="M3 6 Q6 0 13 1 Q16 1.5 15.5 5 Q13 4 10 6 L5 9 Z" fill="#d9a878" stroke="#a87040" stroke-width="0.8"/><path d="M6 12 L8 8 L10 12" stroke="#303030"/></g></g>
<g transform="translate(1201 88)"><g fill="none" stroke="#2a6ee8" stroke-width="1"><path d="M0.5 0 V9 M12.5 0 V9 M1 2.5 H12" stroke="#a8c4f0"/><path d="M3.5 3 V15 M15.5 3 V15 M4 7 H15"/><path d="M4 15 H15" stroke="#202020" stroke-width="1.6"/><circle cx="5.5" cy="7" r="1" fill="#2a6ee8"/><circle cx="13.5" cy="7" r="1" fill="#2a6ee8"/></g></g>
<rect x="1225" y="86" width="1" height="20" fill="#909090"/>
<g transform="translate(1233 88)"><g fill="none" stroke="#2a6ee8" stroke-width="1"><path d="M0.5 1 V16 M15.5 3 V16 M1 13.5 H15"/><circle cx="3" cy="13.5" r="1" fill="#2a6ee8"/><circle cx="13" cy="13.5" r="1" fill="#2a6ee8"/><path d="M14 1 L7 7" stroke="#c89428" stroke-width="2.4"/><path d="M7 7 L4 10" stroke="#222" stroke-width="2.2"/></g></g>
<rect x="3" y="115" width="1" height="1" fill="#909090"/>
<rect x="5" y="115" width="1" height="1" fill="#909090"/>
<rect x="7" y="115" width="1" height="1" fill="#909090"/>
<rect x="9" y="115" width="1" height="1" fill="#909090"/>
<rect x="11" y="115" width="1" height="1" fill="#909090"/>
<rect x="13" y="115" width="1" height="1" fill="#909090"/>
<rect x="15" y="115" width="1" height="1" fill="#909090"/>
<rect x="17" y="115" width="1" height="1" fill="#909090"/>
<rect x="19" y="115" width="1" height="1" fill="#909090"/>
<rect x="21" y="115" width="1" height="1" fill="#909090"/>
<rect x="23" y="115" width="1" height="1" fill="#909090"/>
<rect x="25" y="115" width="1" height="1" fill="#909090"/>
<rect x="27" y="115" width="1" height="1" fill="#909090"/>
<rect x="3" y="116" width="26" height="1" fill="#ffffff"/>
<rect x="29" y="115" width="1" height="786" fill="#a0a0a0"/>
<g transform="translate(6 125)"><g fill="none" stroke="#303030" stroke-width="1.1"><path d="M2.5 2 L14.5 13.5"/><circle cx="2.5" cy="2" r="1.6" fill="#f0d000" stroke="#404040" stroke-width="0.7"/><circle cx="14.5" cy="13.5" r="1.6" fill="#f0d000" stroke="#404040" stroke-width="0.7"/></g></g>
<g transform="translate(6 150)"><g fill="none" stroke="#303030" stroke-width="1.1"><path d="M1.5 0.5 L15.5 15"/><path d="M0.5 -0.5 L4.5 1 L1 4 Z M16.5 16 L12.5 14.5 L16 11.5 Z" fill="#303030"/><circle cx="8.5" cy="7.5" r="1.6" fill="#f0d000" stroke="#404040" stroke-width="0.7"/></g></g>
<g transform="translate(6 174.5)"><g fill="none" stroke="#303030" stroke-width="1.1"><path d="M1 7.5 L4.5 1 H11.5 L15 7.5 L11.5 14 H4.5 Z"/></g></g>
<g transform="translate(6 199.5)"><g fill="none" stroke="#303030" stroke-width="1.1"><path d="M2.5 5 H14.5 V11.5 H2.5 Z"/><circle cx="2.5" cy="4" r="1.6" fill="#f0d000" stroke="#404040" stroke-width="0.7"/><circle cx="14.5" cy="11.5" r="1.6" fill="#f0d000" stroke="#404040" stroke-width="0.7"/></g></g>
<g transform="translate(6 225)"><g fill="none" stroke="#303030" stroke-width="1.1"><path d="M3 6 Q8 0 13.5 6 M3 6 Q5 11 7.5 13"/><circle cx="3" cy="6" r="1.6" fill="#f0d000" stroke="#404040" stroke-width="0.7"/><circle cx="13.5" cy="6" r="1.6" fill="#f0d000" stroke="#404040" stroke-width="0.7"/><circle cx="7.5" cy="13" r="1.6" fill="#f0d000" stroke="#404040" stroke-width="0.7"/></g></g>
<g transform="translate(6 250)"><g fill="none" stroke="#303030" stroke-width="1.1"><path d="M2.5 2 Q9 4 14.5 13.5"/><circle cx="2.5" cy="2" r="1.6" fill="#f0d000" stroke="#404040" stroke-width="0.7"/><circle cx="9" cy="5" r="1.6" fill="#f0d000" stroke="#404040" stroke-width="0.7"/><circle cx="14.5" cy="13.5" r="1.6" fill="#f0d000" stroke="#404040" stroke-width="0.7"/></g></g>
<g transform="translate(6 275)"><g fill="none" stroke="#303030" stroke-width="1.1"><circle cx="8" cy="8" r="7"/><circle cx="7" cy="6" r="1.6" fill="#f0d000" stroke="#404040" stroke-width="0.7"/><circle cx="11" cy="10.5" r="1.6" fill="#f0d000" stroke="#404040" stroke-width="0.7"/></g></g>
<g transform="translate(6 301)"><g fill="none" stroke="#303030" stroke-width="1.1"><ellipse cx="8" cy="8" rx="8" ry="4.5" transform="rotate(-35 8 8)"/><path d="M6 8 H10 M8 6 V10"/><circle cx="14.5" cy="2.5" r="1.6" fill="#f0d000" stroke="#404040" stroke-width="0.7"/><circle cx="1.5" cy="12.5" r="1.6" fill="#f0d000" stroke="#404040" stroke-width="0.7"/><circle cx="4.5" cy="5" r="1.6" fill="#f0d000" stroke="#404040" stroke-width="0.7"/></g></g>
<g transform="translate(6 325.5)"><g fill="none" stroke="#303030" stroke-width="1.1"><path d="M2 14 Q2 3 10 3 Q16 4 14 10 Q12 14 9.5 14"/><path d="M6.5 9 H10.5 M8.5 7 V11"/><circle cx="2" cy="14" r="1.6" fill="#f0d000" stroke="#404040" stroke-width="0.7"/><circle cx="9.5" cy="14" r="1.6" fill="#f0d000" stroke="#404040" stroke-width="0.7"/></g></g>
<g transform="translate(6 350.5)"><g fill="none" stroke="#303030" stroke-width="1.1"><circle cx="2.5" cy="2.5" r="1.6" fill="#f0d000" stroke="#404040" stroke-width="0.7"/><circle cx="11" cy="2" r="1.6" fill="#f0d000" stroke="#404040" stroke-width="0.7"/><circle cx="6" cy="6" r="1.6" fill="#f0d000" stroke="#404040" stroke-width="0.7"/><circle cx="2.5" cy="10.5" r="1.6" fill="#f0d000" stroke="#404040" stroke-width="0.7"/><circle cx="8.5" cy="10" r="1.6" fill="#f0d000" stroke="#404040" stroke-width="0.7"/><circle cx="13" cy="12.5" r="1.6" fill="#f0d000" stroke="#404040" stroke-width="0.7"/></g></g>
<g transform="translate(6 375.5)"><g fill="none" stroke="#303030" stroke-width="1.1"><path d="M2 12.5 Q3 6 7 8 Q10 11 12 6 Q13 3 14 2.5"/><circle cx="2" cy="12.5" r="1.6" fill="#f0d000" stroke="#404040" stroke-width="0.7"/><circle cx="14" cy="2.5" r="1.6" fill="#f0d000" stroke="#404040" stroke-width="0.7"/></g></g>
<defs><pattern id="hp" width="2.2" height="2.2" patternUnits="userSpaceOnUse" patternTransform="rotate(-45)"><rect width="2.2" height="1.1" fill="#606060"/><rect y="1.1" width="2.2" height="1.1" fill="#ffffff"/></pattern></defs>
<rect x="7" y="401" width="15" height="15" fill="url(#hp)"/>
<rect x="7.5" y="401.5" width="14" height="14" fill="none" stroke="#8a8a8a"/>
<g transform="translate(6 425.5)"><g fill="none" stroke="#303030" stroke-width="1.1"><rect x="0.5" y="0.5" width="11" height="13" fill="#fff" stroke="#b0b0b0"/><text x="1.5" y="9" font-size="9" fill="#303030" stroke="none">A</text><circle cx="9" cy="3" r="1.5"/><circle cx="10.5" cy="12" r="4" fill="#1fa33a" stroke="none"/><path d="M10.5 9.5 V14.5 M8 12 H13" stroke="#fff" stroke-width="1.5"/></g></g>
<g transform="translate(6 450)"><g fill="none" stroke="#303030" stroke-width="1.1"><path d="M1 4 L5 0.5 H15 V10 L11 14 H1 Z" fill="#f0d860" stroke="#606060"/><path d="M4 9 V5.5 H11 V9 L9 8 H6 Z" fill="#fff" stroke="#404040"/></g></g>
<g transform="translate(6 475.5)"><g fill="none" stroke="#303030" stroke-width="1.1"><rect x="0.5" y="0.5" width="15" height="13" fill="#fafafa" stroke="#a8a8a8"/><text x="2" y="7" font-size="7" font-weight="bold" fill="#303030" stroke="none">A</text><path d="M8 4.5 H14 M8 7 H14 M2 9.5 H14 M2 12 H14" stroke="#c0c0c0" stroke-width="0.8"/></g></g>
<g transform="translate(6 500.5)"><g fill="none" stroke="#303030" stroke-width="1.1"><rect x="0.5" y="3.5" width="15" height="8" fill="#fafafa" stroke="#a8a8a8"/><text x="2" y="10" font-size="7" font-weight="bold" fill="#303030" stroke="none">A</text><path d="M9 9.5 H14" stroke="#c0c0c0" stroke-width="0.8"/></g></g>
<path d="M7.50 527.50 A1.89 1.89 0 0 1 10.88 527.50 A1.89 1.89 0 0 1 14.25 527.50 A1.89 1.89 0 0 1 17.62 527.50 A1.89 1.89 0 0 1 21.00 527.50 A1.77 1.77 0 0 1 21.00 530.67 A1.77 1.77 0 0 1 21.00 533.83 A1.77 1.77 0 0 1 21.00 537.00 A1.89 1.89 0 0 1 17.62 537.00 A1.89 1.89 0 0 1 14.25 537.00 A1.89 1.89 0 0 1 10.88 537.00 A1.89 1.89 0 0 1 7.50 537.00 A1.77 1.77 0 0 1 7.50 533.83 A1.77 1.77 0 0 1 7.50 530.67 A1.77 1.77 0 0 1 7.50 527.50 Z" fill="none" stroke="#2a2a2a" stroke-width="1.25"/>
<path d="M19.5 525.5 L9.5 535.5 L8 539 L11.5 537.5 L21.5 527.5 Z" fill="#f0c830" stroke="#404040" stroke-width="0.8"/><path d="M19.5 525.5 L21.5 527.5 L20.5 528.5 L18.5 526.5Z" fill="#e06060"/>
<path d="M7.50 552.50 A1.89 1.89 0 0 1 10.88 552.50 A1.89 1.89 0 0 1 14.25 552.50 A1.89 1.89 0 0 1 17.62 552.50 A1.89 1.89 0 0 1 21.00 552.50 A1.82 1.82 0 0 1 21.00 555.75 A1.82 1.82 0 0 1 21.00 559.00 A1.82 1.82 0 0 1 21.00 562.25 A1.82 1.82 0 0 1 21.00 565.50 A1.89 1.89 0 0 1 17.62 565.50 A1.89 1.89 0 0 1 14.25 565.50 A1.89 1.89 0 0 1 10.88 565.50 A1.89 1.89 0 0 1 7.50 565.50 A1.82 1.82 0 0 1 7.50 562.25 A1.82 1.82 0 0 1 7.50 559.00 A1.82 1.82 0 0 1 7.50 555.75 A1.82 1.82 0 0 1 7.50 552.50 Z" fill="none" stroke="#2a2a2a" stroke-width="1.25"/>
<path d="M20.80 584.50 A1.88 1.88 0 0 1 19.93 587.75 A1.88 1.88 0 0 1 17.55 590.13 A1.88 1.88 0 0 1 14.30 591.00 A1.88 1.88 0 0 1 11.05 590.13 A1.88 1.88 0 0 1 8.67 587.75 A1.88 1.88 0 0 1 7.80 584.50 A1.88 1.88 0 0 1 8.67 581.25 A1.88 1.88 0 0 1 11.05 578.87 A1.88 1.88 0 0 1 14.30 578.00 A1.88 1.88 0 0 1 17.55 578.87 A1.88 1.88 0 0 1 19.93 581.25 A1.88 1.88 0 0 1 20.80 584.50 Z" fill="none" stroke="#2a2a2a" stroke-width="1.25"/>
<path d="M14.00 603.50 A1.77 1.77 0 0 1 17.00 604.50 A1.40 1.40 0 0 1 17.00 607.00 A1.13 1.13 0 0 1 19.00 606.75 A1.13 1.13 0 0 1 21.00 606.50 A1.98 1.98 0 0 1 21.50 610.00 A2.04 2.04 0 0 1 18.00 611.00 A1.13 1.13 0 0 1 18.25 613.00 A1.13 1.13 0 0 1 18.50 615.00 A2.13 2.13 0 0 1 15.00 616.50 A1.79 1.79 0 0 1 13.00 614.00 A1.25 1.25 0 0 1 11.00 615.00 A1.25 1.25 0 0 1 9.00 616.00 A1.13 1.13 0 0 1 8.00 614.25 A1.13 1.13 0 0 1 7.00 612.50 A1.29 1.29 0 0 1 8.50 610.75 A1.29 1.29 0 0 1 10.00 609.00 A1.98 1.98 0 0 1 7.50 606.50 A2.13 2.13 0 0 1 11.00 605.00 A1.88 1.88 0 0 1 14.00 603.50 Z" fill="none" stroke="#2a2a2a" stroke-width="1.25"/>
<path d="M20.3 6.6 L33.6 35.8 L18.1 34.4 Z" fill="#8fbccb"/>
<path d="M4.9 13.5 Q13 11.8 18.6 18.5 L18.3 32.2 Q15.5 35 11.9 35.8 Z" fill="#80c640"/>
<path d="M10.8 18.4 Q14 19 15.2 22 Q16 26 14.2 28.8 Z" fill="#eef6e6"/>
<path d="M25.5 22.8 Q22 22 21.8 25 Q22 27 23.5 28 Q24.5 29.5 22.8 31 Q21.5 31.5 20.5 30.5" fill="none" stroke="#f4f8fa" stroke-width="2.2"/>
<rect x="30" y="901" width="1462" height="5" fill="#f0f0f0"/>
<rect x="30" y="901" width="1462" height="1" fill="#fafafa"/>
<path d="M30 901 L32 906 L84 906 L85.5 901 Z" fill="#ffffff"/>
<path d="M85.5 901 L87 906 H152 L153.5 901 Z M153.5 901 L155 906 H218 L219.5 901 Z" fill="#c8c8c8"/>
<path d="M30.5 901 L32.5 906 M85.5 901 L84 906 M85.5 901 L87 906 M153.5 901 L152 906 M153.5 901 L155 906 M219.5 901 L218 906" stroke="#404040" stroke-width="1"/>
<rect x="228.5" y="902.5" width="23" height="6" fill="#e4e4e4" stroke="#b0b0b0"/>
<clipPath id="bt"><rect x="0" y="901" width="1600" height="5"/></clipPath>
<g clip-path="url(#bt)">
<text x="42" y="913" font-size="11" fill="#101010" font-weight="bold">Model</text>
<text x="98" y="913" font-size="11" fill="#303030" stroke="#303030" stroke-width="0.3">Layout1</text>
<text x="166" y="913" font-size="11" fill="#303030" stroke="#303030" stroke-width="0.3">Layout2</text>
<path d="M1357 906 V903" stroke="#404040"/>
</g>
<path d="M1015 903 L1012 906 H1015 Z M1481 903 L1484 906 H1481 Z" fill="#202020"/>
<rect x="1243" y="903" width="12" height="3" fill="#c8c8c8"/>
</svg></body></html>
